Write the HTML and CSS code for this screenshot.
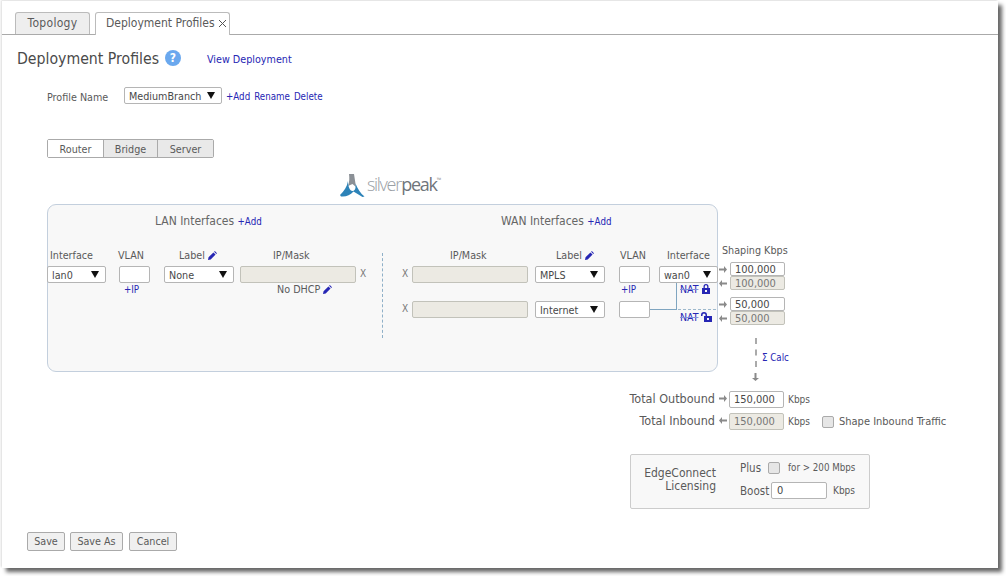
FILE: index.html
```html
<!DOCTYPE html>
<html lang="en">
<head>
<meta charset="utf-8">
<title>Deployment Profiles</title>
<link rel="stylesheet" href="styles.css">
</head>
<body>
<div class="window">
  <div class="tabs">
    <div class="tab">Topology</div>
    <div class="tab active">Deployment Profiles
      <svg class="close" width="7" height="7" viewBox="0 0 7 7"><path d="M0 0L7 7M7 0L0 7"/></svg>
    </div>
  </div>

  <div class="header">
    <h1 class="title">Deployment Profiles</h1>
    <span class="help">?</span>
    <a class="link view">View Deployment</a>
  </div>

  <div class="profile">
    <span class="profile-label">Profile Name</span>
    <div class="select profile-select"><span>MediumBranch</span><i class="caret"></i></div>
    <a class="link small add">+Add</a>
    <a class="link small">Rename</a>
    <a class="link small">Delete</a>
  </div>

  <div class="segments">
    <div class="seg on">Router</div>
    <div class="seg s-bridge">Bridge</div>
    <div class="seg s-server">Server</div>
  </div>

  <div class="logo">
    <svg width="28" height="24" viewBox="0 0 28 24">
      <path fill="#8b9096" d="M10 1h5l2 13-3.500-3-4.500 2c1.500-4 1.500-8 1-12z"/>
      <path fill="#2d83b8" d="M9 8c-1 6-4 10-8 14l1 1.500c5 .5 9-1 12.500-5l9 5.500 2-.5c-4-3-7-8-9-13 .5 5-.5 7-2.500 7.500-3 .5-5-4-5-10.500z"/>
    </svg>
    <span class="brand"><span class="silver">silver</span> <span class="peak">peak</span><sup class="tm">™</sup></span>
  </div>

  <div class="diagram">
    <div class="panel">
      <section class="lan">
        <div class="section-title lan-title">LAN Interfaces <a class="link small">+Add</a></div>
        <div class="lan-grid">
          <div class="head h-if">Interface</div>
          <div class="head h-vlan">VLAN</div>
          <div class="head h-label">Label
            <svg class="pencil" width="9" height="9" viewBox="0 0 10 10"><path d="M0 10l.6-3L6 1.600 8.400 4 3 9.400zM6.800.8L7.600 0 10 2.400 9.200 3.200z"/></svg>
          </div>
          <div class="head h-ip">IP/Mask</div>
          <div></div>

          <div class="select w-if"><span>lan0</span><i class="caret"></i></div>
          <input class="field w-vlan" type="text">
          <div class="select w-label"><span>None</span><i class="caret"></i></div>
          <input class="field w-ip" type="text" disabled>
          <span class="x">X</span>

          <div></div>
          <a class="link small sub add-ip">+IP</a>
          <div></div>
          <div class="sub dhcp">No DHCP
            <svg class="pencil" width="9" height="9" viewBox="0 0 10 10"><path d="M0 10l.6-3L6 1.600 8.400 4 3 9.400zM6.800.8L7.600 0 10 2.400 9.200 3.200z"/></svg>
          </div>
          <div></div>
        </div>
      </section>

      <div class="divider"></div>

      <section class="wan">
        <div class="section-title wan-title">WAN Interfaces <a class="link small">+Add</a></div>
        <div class="wan-grid">
          <div></div>
          <div class="head wh-ip">IP/Mask</div>
          <div class="head wh-label">Label
            <svg class="pencil" width="9" height="9" viewBox="0 0 10 10"><path d="M0 10l.6-3L6 1.600 8.400 4 3 9.400zM6.800.8L7.600 0 10 2.400 9.200 3.200z"/></svg>
          </div>
          <div class="head wh-vlan">VLAN</div>
          <div class="head wh-if">Interface</div>

          <span class="x">X</span>
          <input class="field w-ip" type="text" disabled>
          <div class="select w-label"><span>MPLS</span><i class="caret"></i></div>
          <input class="field w-vlan" type="text">
          <div class="select w-wan"><span>wan0</span><i class="caret"></i></div>

          <div></div>
          <div></div>
          <div></div>
          <a class="link small sub wan-ip">+IP</a>
          <div></div>

          <span class="x">X</span>
          <input class="field w-ip" type="text" disabled>
          <div class="select w-label"><span>Internet</span><i class="caret"></i></div>
          <input class="field w-vlan" type="text">
          <div></div>
        </div>
      </section>
    </div>

    <div class="side">
      <div class="shaping-title">Shaping Kbps</div>
      <div class="rate"><svg class="arr" width="8" height="7" viewBox="0 0 8 7"><path d="M0 2.500h5V0l3 3.500L5 7V4.500H0z"/></svg><input class="num" type="text" value="100,000"></div>
      <div class="rate"><svg class="arr" width="8" height="7" viewBox="0 0 8 7"><path d="M8 2.500H3V0L0 3.500 3 7V4.500h5z"/></svg><input class="num" type="text" value="100,000" disabled></div>
      <div class="rate gap"><svg class="arr" width="8" height="7" viewBox="0 0 8 7"><path d="M0 2.500h5V0l3 3.500L5 7V4.500H0z"/></svg><input class="num" type="text" value="50,000"></div>
      <div class="rate"><svg class="arr" width="8" height="7" viewBox="0 0 8 7"><path d="M8 2.500H3V0L0 3.500 3 7V4.500h5z"/></svg><input class="num" type="text" value="50,000" disabled></div>
      <div class="calc">
        <div class="calc-line"><span class="dash"></span><svg class="arr down" width="7" height="8" viewBox="0 0 7 8"><path d="M2.500 0v5H0l3.500 3L7 5H4.500V0z"/></svg></div>
        <a class="link small calc-link">Σ Calc</a>
      </div>
    </div>

    <div class="wire"></div>
    <div class="wire-dash"></div>
    <div class="nat nat-1"><a class="link small nat-text">NAT</a>
      <svg class="lock" width="8" height="10" viewBox="0 0 8 10"><path fill-rule="evenodd" d="M1.500 4V2.500a2.500 2.500 0 0 1 5 0V4H8v6H0V4zM2.800 4h2.400V2.500a1.200 1.200 0 0 0-2.400 0zM3 6v2h2V6z"/></svg>
    </div>
    <div class="nat nat-2"><a class="link small nat-text">NAT</a>
      <svg class="lock" width="11" height="10" viewBox="0 0 11 10"><path fill-rule="evenodd" d="M0 3a3 3 0 0 1 6 0v1h5v6H3V4h1.500V3a1.500 1.500 0 0 0-3 0v1H0zM6 6v2h2V6z"/></svg>
    </div>
  </div>

  <div class="totals">
    <label class="t-label">Total Outbound</label>
    <svg class="arr" width="8" height="7" viewBox="0 0 8 7"><path d="M0 2.500h5V0l3 3.500L5 7V4.500H0z"/></svg>
    <input class="num total" type="text" value="150,000">
    <span class="unit">Kbps</span>
    <span></span>

    <label class="t-label">Total Inbound</label>
    <svg class="arr" width="8" height="7" viewBox="0 0 8 7"><path d="M8 2.500H3V0L0 3.500 3 7V4.500h5z"/></svg>
    <input class="num total" type="text" value="150,000" disabled>
    <span class="unit">Kbps</span>
    <span class="shape"><input class="check" type="checkbox"><span>Shape Inbound Traffic</span></span>
  </div>

  <div class="license">
    <div class="lic-name">EdgeConnect<br>Licensing</div>
    <div class="lic-body">
      <div class="lic-row plus"><span class="lic-key">Plus</span><input class="check" type="checkbox"><span class="unit">for &gt; 200 Mbps</span></div>
      <div class="lic-row"><span class="lic-key boost">Boost</span><input class="num boost-input" type="text" value="0"><span class="unit">Kbps</span></div>
    </div>
  </div>

  <div class="actions">
    <button class="btn btn-save">Save</button>
    <button class="btn btn-as">Save As</button>
    <button class="btn btn-cancel">Cancel</button>
  </div>
</div>
</body>
</html>
```
FILE: styles.css
```css
* { box-sizing: border-box; }
html, body { height: 100%; }
body {
  margin: 0;
  padding: 1px 8px 8px 2px;
  background: #fff;
  overflow: hidden;
  font-family: "DejaVu Sans", "Liberation Sans", sans-serif;
  font-stretch: condensed;
  font-size: 10.700px;
  color: #5a5a5a;
}
.window {
  width: 996px;
  height: 567px;
  background: #fff;
  box-shadow: 4px 4px 4px #666, -1px -1px 2px #ddd;
}
.tabs {
  display: flex;
  align-items: flex-end;
  gap: 5px;
  height: 34px;
  padding-left: 13px;
  border-bottom: 1px solid #aaa;
}
.tab {
  width: 75px;
  height: 22px;
  border: 1px solid #bbb;
  border-bottom: 0;
  border-radius: 3px 3px 0 0;
  background: #eee;
  font-size: 12px;
  letter-spacing: .3px;
  line-height: 20px;
  text-align: center;
  color: #5a5a5a;
}
.tab.active {
  width: 135px;
  height: 23px;
  margin-bottom: -1px;
  background: #fff;
  letter-spacing: 0;
  text-align: left;
  padding-left: 10px;
}
.close { fill: none; stroke: #555; stroke-width: 1; margin-left: 1px; }

.header {
  display: flex;
  align-items: center;
  height: 24px;
  margin-top: 11px;
  padding-left: 15px;
}
.title { margin: 0; font-size: 15.700px; font-weight: normal; color: #4a4a4a; }
.help {
  width: 16px;
  height: 16px;
  margin-left: 6px;
  border-radius: 50%;
  background: #6aa8ee;
  color: #fff;
  font-weight: bold;
  font-size: 12px;
  line-height: 16px;
  text-align: center;
}
.link { color: #2626b4; }
.view { margin-left: 26px; padding-top: 2px; font-size: 10.700px; }
.small { font-size: 9.700px; }

.profile {
  display: flex;
  align-items: center;
  gap: 4px;
  height: 17px;
  margin-top: 17px;
  padding-left: 45px;
}
.profile-label { width: 73px; padding-top: 3px; }
.profile .link { padding-top: 1px; }
.add { margin-left: 0; }

.select {
  display: flex;
  align-items: center;
  justify-content: space-between;
  height: 17px;
  padding: 1px 6px 0 4px;
  background: #fff;
  border: 1px solid #b5b5b5;
  border-radius: 2px;
  color: #484848;
}
.caret {
  width: 0;
  height: 0;
  margin-top: -2px;
  border-left: 4px solid transparent;
  border-right: 4px solid transparent;
  border-top: 7px solid #111;
}
.profile-select { width: 98px; }

.segments {
  display: flex;
  width: 167px;
  height: 19px;
  margin: 35px 0 0 45px;
  border: 1px solid #aaa;
  border-radius: 2px;
}
.seg {
  width: 55px;
  padding-top: 1px;
  line-height: 17px;
  text-align: center;
  background: #e9e9e9;
  border-left: 1px solid #aaa;
}
.seg.on { background: #fff; border-left: 0; }
.s-bridge { width: 54px; }
.s-server { width: 56px; }

.logo {
  display: flex;
  align-items: flex-start;
  height: 24px;
  margin: 15px 0 0 337px;
}
.brand {
  font-family: "Open Sans", sans-serif;
  font-stretch: normal;
  font-size: 18px;
  line-height: 22px;
  letter-spacing: -1.300px;
  word-spacing: -3px;
  white-space: nowrap;
}
.silver { color: #9aa0a5; font-weight: 300; }
.peak { color: #6f757b; font-weight: 400; }
.tm { font-size: 6px; letter-spacing: 0; vertical-align: 9px; line-height: 0; color: #999; }

.diagram {
  position: relative;
  display: flex;
  height: 187px;
  margin: 7px 0 0 45px;
}
.panel {
  display: flex;
  flex: none;
  width: 671px;
  height: 168px;
  background: #f8f8f8;
  border: 1px solid #c3cfdd;
  border-radius: 9px;
}
.lan { flex: none; width: 335px; margin-left: -1px; }
.wan { flex: none; padding-left: 19px; }
.section-title { height: 16px; margin-top: 8px; line-height: 16px; color: #666; font-size: 12px; white-space: nowrap; }
.lan-title { padding-left: 108px; }
.wan-title { padding-left: 99px; }
.divider {
  flex: none;
  width: 0;
  height: 85px;
  margin-top: 48px;
  border-left: 1px dashed #8fb0c8;
}
.lan-grid, .wan-grid { display: grid; margin-top: 19px; align-items: center; justify-items: start; }
.lan-grid { grid-template-columns: 72px 45px 76px 120px 20px; grid-template-rows: 18px 17px 18px; }
.wan-grid { grid-template-columns: 10px 123px 84px 40px 59px; grid-template-rows: 18px 17px 18px 17px; }
.head { margin-top: -4px; white-space: nowrap; }
.h-if { padding-left: 3px; }
.h-vlan { margin-left: -1px; }
.h-label { padding-left: 15px; }
.h-ip { padding-left: 33px; }
.wh-ip { padding-left: 38px; }
.wh-label { padding-left: 21px; }
.wh-vlan { padding-left: 1px; }
.wh-if { padding-left: 8px; }
.pencil { fill: #2626b4; vertical-align: -1px; }
.field {
  display: block;
  height: 17px;
  margin: 0;
  padding: 0 4px;
  background: #fff;
  border: 1px solid #b5b5b5;
  border-radius: 2px;
}
.field:disabled { background: #eceae3; border-color: #c2c2ba; }
.w-if { width: 59px; }
.w-vlan { width: 31px; }
.w-label { width: 70px; }
.w-ip { width: 116px; }
.w-wan { width: 59px; }
.x { color: #777; font-size: 10px; margin-top: -3px; }
.sub { margin-top: -6px; white-space: nowrap; }
.add-ip { padding-left: 5px; }
.wan-ip { padding-left: 2px; }
.dhcp { padding-left: 37px; }

.side { flex: none; width: 70px; padding-top: 40px; }
.shaping-title { height: 18px; padding-left: 4px; line-height: 14px; white-space: nowrap; }
.rate { display: flex; align-items: center; gap: 3px; height: 14px; padding-left: 1px; }
.rate.gap { margin-top: 7px; }
.num {
  width: 55px;
  height: 14px;
  margin: 0;
  padding: 0 4px;
  background: #fff;
  border: 1px solid #b5b5b5;
  border-radius: 2px;
  font: inherit;
  font-size: 11px;
  color: #484848;
}
.num:disabled { background: #eceae3; border-color: #c2c2ba; color: #777; }
.arr { flex: none; fill: #8a8a8a; }
.calc { display: flex; margin-top: 13px; padding-left: 34px; }
.calc-line { display: flex; flex-direction: column; align-items: center; width: 7px; }
.dash { height: 29px; border-left: 2px dashed #aaa; }
.down { margin-top: 6px; }
.calc-link { margin: 14px 0 0 3px; white-space: nowrap; }

.wire {
  position: absolute;
  left: 603px;
  top: 79px;
  width: 27px;
  height: 27px;
  border-right: 1px solid #7fa5c0;
  border-bottom: 1px solid #7fa5c0;
}
.wire-dash {
  position: absolute;
  left: 631px;
  top: 105px;
  width: 38px;
  border-top: 1px dashed #9db8cc;
}
.nat {
  position: absolute;
  left: 633px;
  display: flex;
  align-items: center;
  height: 12px;
}
.nat-1 { top: 79px; gap: 4px; }
.nat-2 { top: 107px; gap: 3px; }
.nat-text { text-decoration: line-through; text-decoration-color: #8090dc; font-size: 10.500px; }
.lock { fill: #2626b4; flex: none; }

.totals {
  display: grid;
  grid-template-columns: 87px 12px 55px 38px 130px;
  grid-template-rows: 17px 17px;
  row-gap: 5px;
  align-items: center;
  justify-items: start;
  margin: 0 0 0 628px;
}
.t-label { justify-self: end; margin-top: -2px; padding-right: 2px; font-size: 12.500px; white-space: nowrap; }
.total { height: 17px; }
.totals .arr { margin-left: 2px; margin-top: -3px; }
.unit { font-size: 10px; padding-left: 4px; white-space: nowrap; }
.shape { display: flex; align-items: center; gap: 5px; white-space: nowrap; font-size: 11px; }
.check {
  appearance: none;
  width: 12px;
  height: 12px;
  margin: 0;
  background: #e6e6e6;
  border: 1px solid #aaa;
  border-radius: 2px;
}
.license {
  display: flex;
  width: 240px;
  height: 55px;
  margin: 24px 0 0 628px;
  background: #f8f8f8;
  border: 1px solid #ccc;
  border-radius: 2px;
}
.lic-name { width: 85px; padding-top: 12px; text-align: right; font-size: 12px; line-height: 13px; }
.lic-body { margin-left: 24px; }
.lic-row { display: flex; align-items: center; height: 17px; }
.plus { margin-top: 4px; margin-bottom: 6px; }
.lic-key { width: 28px; font-size: 11.500px; }
.boost { width: 31px; }
.plus .unit { padding-left: 6px; font-size: 9.700px; }
.boost-input { height: 17px; width: 56px; padding-left: 5px; }
.lic-row .unit { margin-left: 2px; }
.actions { display: flex; margin: 23px 0 0 25px; }
.btn {
  height: 19px;
  padding: 0;
  background: #f0f0f0;
  border: 1px solid #aaa;
  border-radius: 2px;
  font: inherit;
  color: #5a5a5a;
}
.btn-save { width: 38px; }
.btn-as { width: 53px; margin-left: 5px; }
.btn-cancel { width: 48px; margin-left: 6px; }
```
